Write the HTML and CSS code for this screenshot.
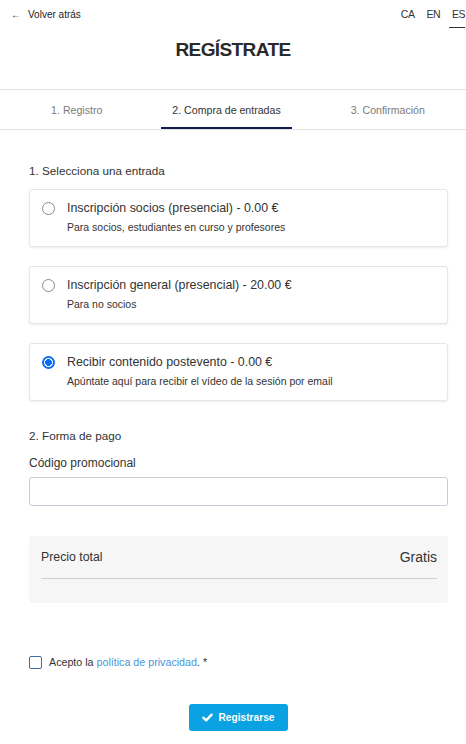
FILE: index.html
```html
<!DOCTYPE html>
<html lang="es">
<head>
<meta charset="utf-8">
<title>Regístrate</title>
<link rel="stylesheet" href="styles.css">
</head>
<body>
<header class="header">
  <div class="topbar">
    <a class="back" href="#"><span class="back-arrow">&larr;</span>Volver atrás</a>
    <nav class="langs">
      <a class="lang" href="#">CA</a>
      <a class="lang" href="#">EN</a>
      <a class="lang lang-active" href="#">ES</a>
    </nav>
  </div>
  <h1 class="title">REGÍSTRATE</h1>
</header>

<nav class="steps">
  <div class="step">1. Registro</div>
  <div class="step step-active">2. Compra de entradas</div>
  <div class="step">3. Confirmación</div>
</nav>

<main class="content">
  <h2 class="section-label section-first">1. Selecciona una entrada</h2>

  <label class="ticket">
    <span class="radio"></span>
    <span class="ticket-text">
      <span class="ticket-title">Inscripción socios (presencial) - 0.00 €</span>
      <span class="ticket-sub">Para socios, estudiantes en curso y profesores</span>
    </span>
  </label>

  <label class="ticket">
    <span class="radio"></span>
    <span class="ticket-text">
      <span class="ticket-title">Inscripción general (presencial) - 20.00 €</span>
      <span class="ticket-sub">Para no socios</span>
    </span>
  </label>

  <label class="ticket">
    <span class="radio radio-checked"></span>
    <span class="ticket-text">
      <span class="ticket-title">Recibir contenido postevento - 0.00 €</span>
      <span class="ticket-sub">Apúntate aquí para recibir el vídeo de la sesión por email</span>
    </span>
  </label>

  <h2 class="section-label section-second">2. Forma de pago</h2>
  <div class="field-label">Código promocional</div>
  <input class="field-input" type="text">

  <div class="price-box">
    <div class="price-row">
      <span class="price-label">Precio total</span>
      <span class="price-value">Gratis</span>
    </div>
  </div>

  <div class="accept">
    <span class="checkbox"></span>
    <span class="accept-text">Acepto la <a class="accept-link" href="#">política de privacidad</a>. *</span>
  </div>

  <div class="actions">
    <button class="submit" type="button">
      <svg class="submit-icon" viewBox="0 0 12 10" width="11" height="9" aria-hidden="true"><path d="M1.4 5.2 L4.5 8.2 L10.6 1.8" fill="none" stroke="#fff" stroke-width="2.6" stroke-linecap="round" stroke-linejoin="round"/></svg>
      Registrarse
    </button>
  </div>
</main>
</body>
</html>
```

FILE: styles.css
```css
* { box-sizing: border-box; }

body {
  margin: 0;
  background: #fff;
  color: #333;
  font-family: "Liberation Sans", Arial, sans-serif;
  overflow-x: hidden;
}

a { text-decoration: none; color: inherit; }

.topbar {
  display: flex;
  justify-content: space-between;
  align-items: flex-start;
  padding: 8px 0 0 11px;
  height: 29px;
}

.back {
  font-size: 10px;
  line-height: 13px;
  color: #222;
  display: flex;
  align-items: center;
}

.back-arrow {
  font-size: 10px;
  margin-right: 7px;
}

.langs {
  display: flex;
  gap: 12px;
  margin-right: 1px;
}

.lang {
  font-size: 10.5px;
  line-height: 13px;
  letter-spacing: -0.5px;
  padding-bottom: 6px;
  color: #333;
}

.lang-active {
  border-bottom: 1px solid #333;
  padding-left: 3px;
  margin-left: -3px;
}

.title {
  margin: 10px 0 28px;
  text-align: center;
  font-size: 19px;
  line-height: 22px;
  font-weight: 700;
  color: #2a2a2a;
  letter-spacing: -0.6px;
}

.steps {
  display: flex;
  justify-content: center;
  gap: 48px;
  border-top: 1px solid #e2e2e2;
  border-bottom: 1px solid #e2e2e2;
  padding-left: 10px;
}

.step {
  height: 39px;
  padding: 0 11px;
  display: flex;
  align-items: center;
  font-size: 10.6px;
  color: #7a7a7a;
}

.step-active {
  color: #333;
  border-bottom: 2px solid #121a4a;
  padding-top: 2px;
}

.content {
  padding: 0 18px 40px 29px;
}

.section-label {
  margin: 0;
  font-size: 11.7px;
  line-height: 16px;
  font-weight: 400;
  color: #333;
}

.section-first { margin-top: 33px; margin-bottom: 10px; }
.section-second { margin-top: 27px; }

.ticket {
  display: flex;
  align-items: flex-start;
  gap: 12px;
  height: 58px;
  border: 1px solid #e6e6e6;
  border-radius: 3px;
  box-shadow: 0 1px 2px rgba(0, 0, 0, 0.08);
  padding: 10px 12px 0;
  margin-bottom: 19px;
  background: #fff;
}

.radio {
  flex: none;
  width: 13px;
  height: 13px;
  margin-top: 1.5px;
  border: 1px solid #8a8a8a;
  border-radius: 50%;
  background: #fff;
}

.radio-checked {
  border: 2px solid #0b6cf5;
  background: radial-gradient(circle, #0b6cf5 0 3.2px, #fff 3.6px);
}

.ticket-text {
  display: flex;
  flex-direction: column;
  gap: 3px;
}

.ticket-title {
  font-size: 12.4px;
  line-height: 16px;
  color: #333;
}

.ticket-sub {
  font-size: 10.5px;
  line-height: 16px;
  color: #333;
}

.field-label {
  margin-top: 11px;
  font-size: 12px;
  line-height: 16px;
  color: #333;
}

.field-input {
  display: block;
  width: 100%;
  height: 29px;
  margin-top: 6px;
  border: 1px solid #c6ced8;
  border-radius: 3px;
  background: #fff;
}

.price-box {
  margin-top: 30px;
  background: #f6f6f6;
  border-radius: 3px;
  padding: 13px 11px 24px 12px;
}

.price-row {
  display: flex;
  justify-content: space-between;
  align-items: center;
  height: 30px;
  padding-bottom: 13px;
  border-bottom: 1px solid #d0d0d0;
}

.price-label {
  font-size: 12.3px;
  color: #333;
}

.price-value {
  font-size: 14px;
  color: #333;
}

.accept {
  margin-top: 51px;
  display: flex;
  align-items: center;
  gap: 7px;
  height: 16px;
}

.checkbox {
  flex: none;
  width: 13px;
  height: 13px;
  border: 1.5px solid #3b6fa3;
  border-radius: 2px;
  background: #fff;
}

.accept-text {
  font-size: 10.7px;
  color: #333;
}

.accept-link {
  color: #4a94d8;
}

.actions {
  margin-top: 34px;
  display: flex;
  justify-content: center;
}

.submit {
  display: flex;
  align-items: center;
  gap: 5px;
  height: 27px;
  padding: 0 13px;
  border: none;
  border-radius: 3px;
  background: #0aa2e3;
  color: #fff;
  font-family: "Liberation Sans", Arial, sans-serif;
  font-size: 10.2px;
  font-weight: 700;
}

.submit-icon {
  display: block;
}
```
